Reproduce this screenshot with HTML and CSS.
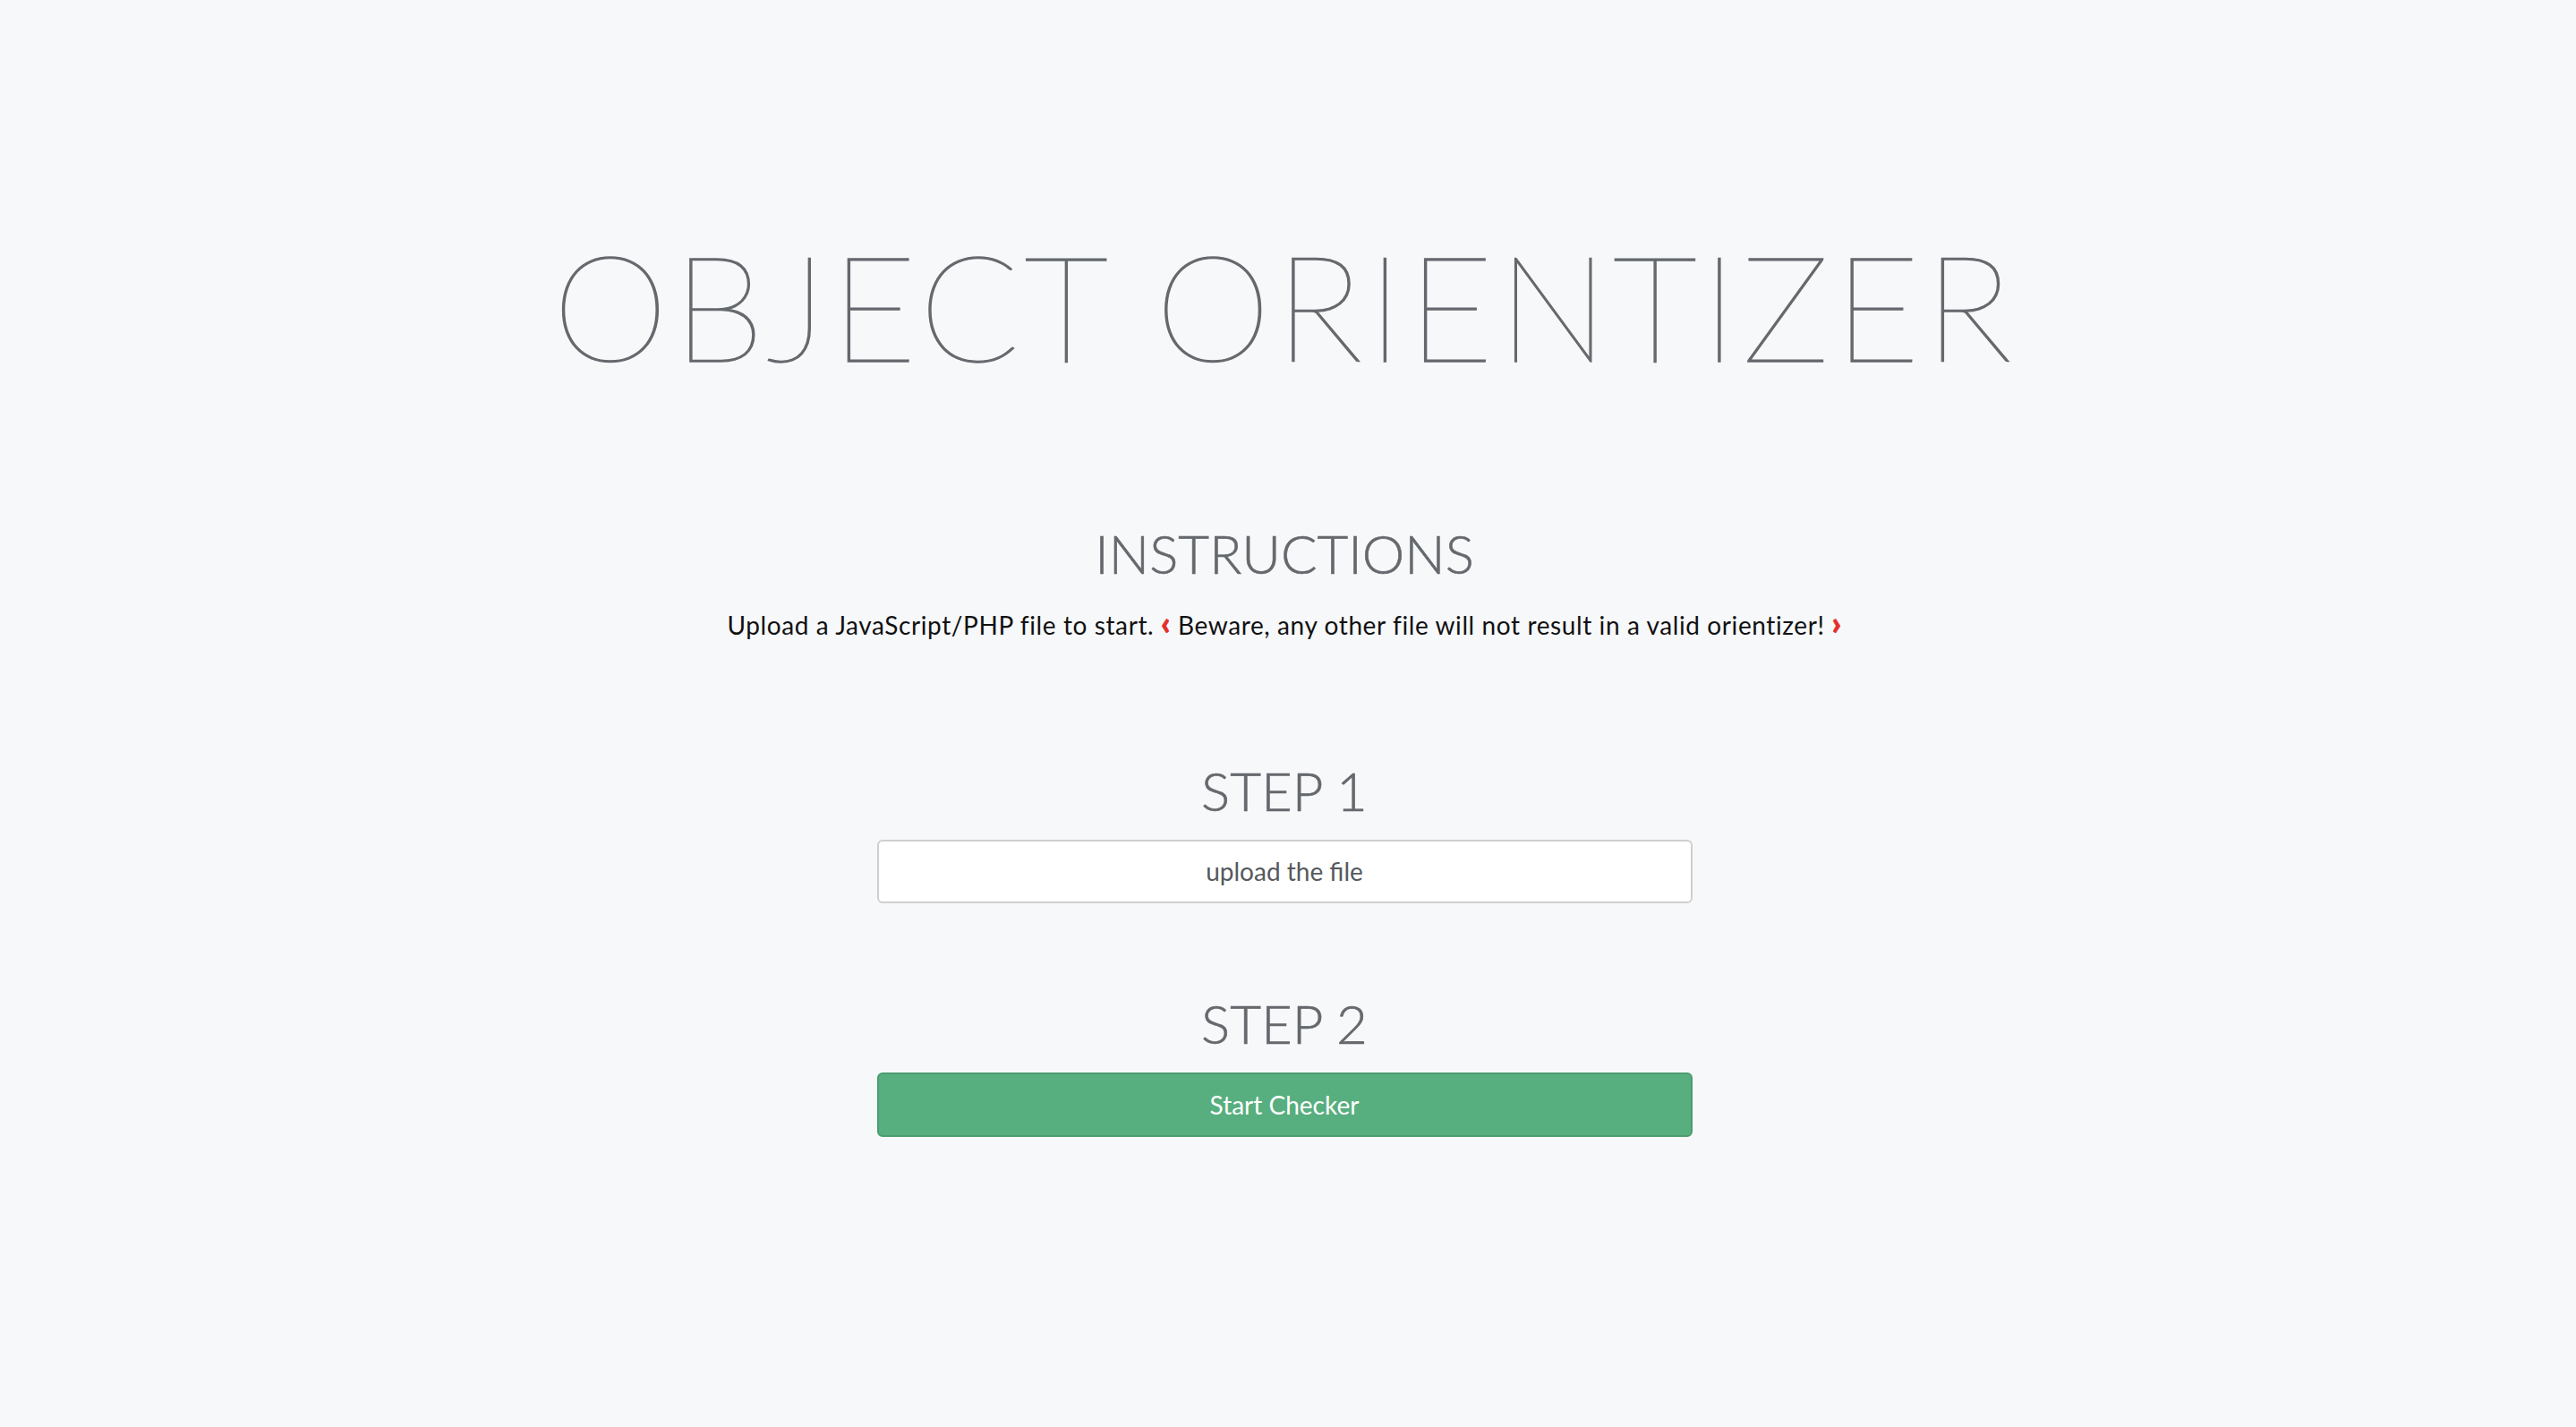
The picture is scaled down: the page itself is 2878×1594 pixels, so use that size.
FILE: index.html
```html
<!DOCTYPE html>
<html lang="en">
<head>
<meta charset="utf-8">
<title>Object Orientizer</title>
<link rel="stylesheet" href="styles.css">
</head>
<body>
<main class="page">
  <h1 class="title">OBJECT ORIENTIZER</h1>
  <section class="instructions">
    <h2 class="heading">INSTRUCTIONS</h2>
    <p class="lead">Upload a JavaScript/PHP file to start. <span class="mark">&lsaquo;</span> Beware, any other file will not result in a valid orientizer! <span class="mark">&rsaquo;</span></p>
  </section>
  <section class="step">
    <h2 class="heading">STEP 1</h2>
    <div class="field">upload the file</div>
  </section>
  <section class="step">
    <h2 class="heading">STEP 2</h2>
    <button class="btn" type="button">Start Checker</button>
  </section>
</main>
</body>
</html>
```

FILE: styles.css
```css
html, body {
  margin: 0;
  padding: 0;
  background: #f7f8fa;
}
body {
  font-family: Lato, "Open Sans", sans-serif;
  color: #666a6e;
  min-height: 1594px;
}
.page {
  display: flex;
  flex-direction: column;
  align-items: center;
  padding-top: 250px;
  padding-right: 8px;
}
.title {
  margin: 0;
  font-weight: 200;
  font-size: 165px;
  line-height: 1.1;
  letter-spacing: 5px;
  color: #65696d;
  -webkit-text-stroke: 1.4px #65696d;
}
.instructions {
  margin-top: 153px;
  display: flex;
  flex-direction: column;
  align-items: center;
}
.heading {
  margin: 0;
  font-weight: 300;
  font-size: 60px;
  line-height: 1.1;
  color: #65696d;
  -webkit-text-stroke: 0.6px #65696d;
}
.lead {
  margin: 26px 0 0;
  font-size: 28px;
  line-height: 1.3;
  color: #111;
  letter-spacing: 0.6px;
}
.mark {
  color: #e2302b;
  font-weight: 900;
  font-size: 36px;
  line-height: 1;
  -webkit-text-stroke: 0.8px #e2302b;
}
.step {
  width: 911px;
  display: flex;
  flex-direction: column;
  align-items: center;
  margin-top: 134px;
}
.step + .step {
  margin-top: 101px;
}
.field {
  margin-top: 22px;
  box-sizing: border-box;
  width: 100%;
  height: 71px;
  border: 2px solid #cfcfcf;
  border-radius: 6px;
  background: #fff;
  display: flex;
  align-items: center;
  justify-content: center;
  font-size: 28px;
  color: #55595c;
}
.btn {
  margin-top: 22px;
  box-sizing: border-box;
  width: 100%;
  height: 72px;
  border: 2px solid #4c9d70;
  border-radius: 6px;
  background: #57ae7e;
  color: #fff;
  font-family: Lato, "Open Sans", sans-serif;
  font-size: 28px;
  cursor: pointer;
}
```
